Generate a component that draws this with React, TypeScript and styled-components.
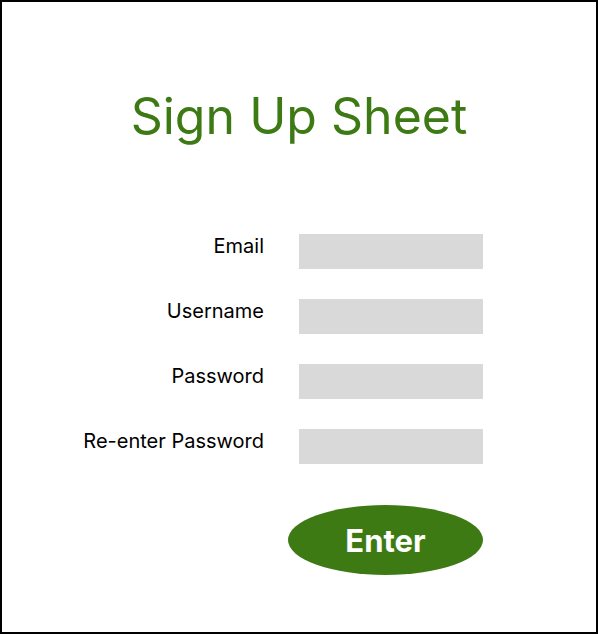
import React, {FC} from 'react';
import styled, {createGlobalStyle} from "styled-components";

const GlobalStyle = createGlobalStyle`
    html, body {
        margin: 0;
        padding: 0;
        background: #ffffff;
    }
    body {
        font-family: Inter, "Noto Sans", sans-serif;
    }
`

const GREEN = "#3e7a14"

interface IField {
    label: string,
}

const fields: IField[] = [
    {label: "Email"},
    {label: "Username"},
    {label: "Password"},
    {label: "Re-enter Password"},
]

const App: FC = () => {
    return (
        <>
            <GlobalStyle/>
            <Sheet>
                <Title>Sign Up Sheet</Title>
                <Form>
                    {fields.map(f => (
                        <Row key={f.label}>
                            <Label>{f.label}</Label>
                            <Input type={f.label.includes("Password") ? "password" : "text"}/>
                        </Row>
                    ))}
                </Form>
                <ButtonRow>
                    <EnterButton>Enter</EnterButton>
                </ButtonRow>
            </Sheet>
        </>
    );
};

export default App;

const Sheet = styled.div`
    box-sizing: border-box;
    width: 598px;
    height: 634px;
    border: 2px solid #000;
    display: flex;
    flex-direction: column;
    align-items: stretch;
`

const Title = styled.h1`
    margin: 79px 0 0;
    text-align: center;
    font-weight: 400;
    font-size: 50px;
    line-height: 70px;
    color: ${GREEN};
`

const Form = styled.div`
    margin-top: 83px;
    display: flex;
    flex-direction: column;
    gap: 30px;
`

const Row = styled.div`
    display: grid;
    grid-template-columns: 262px 184px;
    column-gap: 35px;
    align-items: start;
`

const Label = styled.span`
    text-align: right;
    font-size: 20px;
    line-height: 24px;
    color: #000;
`

const Input = styled.input`
    box-sizing: border-box;
    height: 35px;
    width: 184px;
    border: none;
    background: #d9d9d9;
    outline: none;
    padding: 0 8px;
`

const ButtonRow = styled.div`
    margin-top: 41px;
    padding-left: 286px;
`

const EnterButton = styled.button`
    width: 195px;
    height: 70px;
    border: none;
    border-radius: 50%;
    background: ${GREEN};
    color: #fff;
    font-family: Inter, "Noto Sans", sans-serif;
    font-weight: 700;
    font-size: 31px;
    cursor: pointer;
`
